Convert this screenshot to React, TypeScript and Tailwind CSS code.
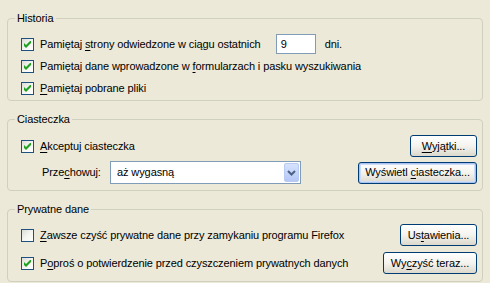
import type { ReactNode } from 'react';

const FONT = "font-['Liberation_Sans',Arial,sans-serif] text-[11px] leading-[13px] tracking-[-0.1px]";

function Check({ checked }: { checked: boolean }) {
    return (
        <span className="w-[13px] h-[13px] shrink-0 border border-[#1C5180] bg-gradient-to-br from-[#DCDCD7] via-[#F4F4F0] to-white flex items-center justify-center">
            {checked && (
                <svg width="7" height="7" viewBox="0 0 7 7">
                    <path d="M0 2 L2 4 L6 0 L7 0 L7 2 L2 7 L0 5 Z" fill="#21A121" />
                </svg>
            )}
        </span>
    );
}

function U({ children }: { children: ReactNode }) {
    return <span className="underline underline-offset-[2px]">{children}</span>;
}

function CheckRow({ checked, children }: { checked: boolean; children: ReactNode }) {
    return (
        <div className="flex items-center gap-[6px]">
            <Check checked={checked} />
            <span className="whitespace-nowrap">{children}</span>
        </div>
    );
}

function XpButton({ w, active, children }: { w: string; active?: boolean; children: ReactNode }) {
    return (
        <button
            className={`${w} h-[22px] shrink-0 rounded-[3px] border border-[#003C74] bg-gradient-to-b from-white via-[#F4F3EE] to-[#DCD8CC] text-black ${
                active ? 'shadow-[inset_0_0_0_1px_#A9C2F0,inset_0_0_0_2px_#CEDCF8]' : ''
            }`}
        >
            {children}
        </button>
    );
}

function Group({ title, children }: { title: string; children: ReactNode }) {
    return (
        <fieldset className="border border-[#D0D0BF] rounded-[4px] pl-[13px] pr-[5px]">
            <legend className="ml-[-6px] px-[2px] leading-[13px]">{title}</legend>
            {children}
        </fieldset>
    );
}

export default function App() {
    return (
        <div className={`w-[490px] h-[283px] bg-[#ECE9D8] text-black pl-[7px] pr-[7px] pt-[12px] overflow-hidden ${FONT}`}>
            <Group title="Historia">
                <div className="pt-[8px] pb-[1px]">
                    <div className="h-[22px] flex items-center">
                        <CheckRow checked>
                            Pamiętaj <U>s</U>trony odwiedzone w ciągu ostatnich
                        </CheckRow>
                        <div className="ml-[15px] w-[40px] h-[20px] border border-[#7F9DB9] bg-white flex items-center px-[4px]">9</div>
                        <span className="ml-[9px]">dni.</span>
                    </div>
                    <div className="h-[22px] flex items-center">
                        <CheckRow checked>
                            Pamiętaj dane wprowadzone w <U>f</U>ormularzach i pasku wyszukiwania
                        </CheckRow>
                    </div>
                    <div className="h-[22px] flex items-center">
                        <CheckRow checked>
                            <U>P</U>amiętaj pobrane pliki
                        </CheckRow>
                    </div>
                </div>
            </Group>

            <div className="mt-[12px]">
                <Group title="Ciasteczka">
                    <div className="pt-[9px] pb-[6px] flex flex-col gap-[4px]">
                        <div className="h-[22px] flex items-center justify-between">
                            <CheckRow checked>
                                <U>A</U>kceptuj ciasteczka
                            </CheckRow>
                            <XpButton w="w-[67px]">
                                <U>W</U>yjątki...
                            </XpButton>
                        </div>
                        <div className="h-[23px] flex items-center justify-between">
                            <div className="flex items-center">
                                <span className="ml-[21px] w-[68px]">
                                    Prze<U>c</U>howuj:
                                </span>
                                <div className="w-[191px] h-[23px] border border-[#7F9DB9] bg-white flex items-center justify-between pl-[6px] pr-[1px]">
                                    <span>aż wygasną</span>
                                    <span className="w-[15px] h-[19px] rounded-[2px] bg-gradient-to-b from-[#D7E2FD] to-[#B4C8F6] border border-[#B9CBF3] flex items-center justify-center">
                                        <svg width="9" height="6" viewBox="0 0 9 6">
                                            <path d="M1 1 L4.5 4.5 L8 1" stroke="#4D6185" strokeWidth="2" fill="none" />
                                        </svg>
                                    </span>
                                </div>
                            </div>
                            <XpButton w="w-[119px]" active>
                                Wyświetl <U>c</U>iasteczka...
                            </XpButton>
                        </div>
                    </div>
                </Group>
            </div>

            <div className="mt-[12px]">
                <Group title="Prywatne dane">
                    <div className="pt-[8px] pb-[7px] flex flex-col gap-[6px]">
                        <div className="h-[22px] flex items-center justify-between">
                            <CheckRow checked={false}>
                                <U>Z</U>awsze czyść prywatne dane przy zamykaniu programu Firefox
                            </CheckRow>
                            <XpButton w="w-[77px]">
                                Us<U>t</U>awienia...
                            </XpButton>
                        </div>
                        <div className="h-[22px] flex items-center justify-between">
                            <CheckRow checked>
                                P<U>o</U>proś o potwierdzenie przed czyszczeniem prywatnych danych
                            </CheckRow>
                            <XpButton w="w-[94px]">
                                Wy<U>c</U>zyść teraz...
                            </XpButton>
                        </div>
                    </div>
                </Group>
            </div>
        </div>
    );
}
